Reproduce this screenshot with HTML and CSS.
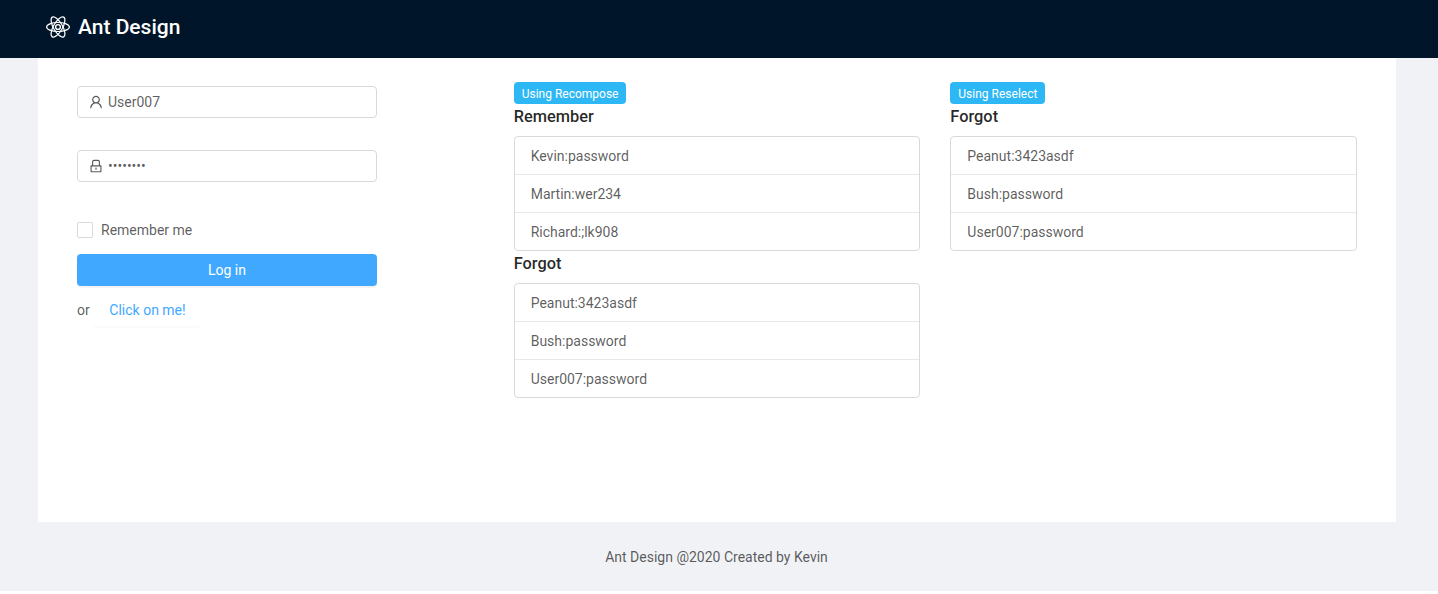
FILE: index.html
```html
<!DOCTYPE html>
<html lang="en">
<head>
<meta charset="utf-8">
<title>Ant Design</title>
<link rel="stylesheet" href="styles.css">
</head>
<body>
<div class="layout">
  <header class="header">
    <svg class="logo" viewBox="0 0 32 32" width="32" height="32" fill="none" stroke="#fff" stroke-width="1.2">
      <circle cx="16" cy="16" r="2.4" fill="none" stroke-width="1.4"/>
      <ellipse cx="16" cy="16" rx="11.4" ry="4.5"/>
      <ellipse cx="16" cy="16" rx="11.4" ry="4.5" transform="rotate(60 16 16)"/>
      <ellipse cx="16" cy="16" rx="11.4" ry="4.5" transform="rotate(120 16 16)"/>
    </svg>
    <span class="brand">Ant Design</span>
  </header>
  <main class="content">
    <section class="col">
      <form class="login">
        <label class="field">
          <svg class="icon" viewBox="64 64 896 896"><path d="M858.5 763.6a374 374 0 0 0-80.6-119.5 375.63 375.63 0 0 0-119.5-80.6c-.4-.2-.8-.3-1.2-.5C719.5 518 760 444.7 760 362c0-137-111-248-248-248S264 225 264 362c0 82.7 40.5 156 102.8 201.1-.4.2-.8.3-1.2.5-44.8 18.9-85 46-119.5 80.6a375.63 375.63 0 0 0-80.6 119.5A371.7 371.7 0 0 0 136 901.8a8 8 0 0 0 8 8.2h60c4.4 0 7.9-3.5 8-7.8 2-77.2 33-149.5 87.8-204.3 56.7-56.7 132-87.9 212.2-87.9s155.5 31.2 212.2 87.9C779 752.7 810 825 812 902.2c.1 4.4 3.6 7.8 8 7.8h60a8 8 0 0 0 8-8.2c-1-47.8-10.9-94.3-29.5-138.2zM512 534c-45.9 0-89.1-17.9-121.6-50.4S340 407.9 340 362c0-45.9 17.9-89.1 50.4-121.6S466.1 190 512 190s89.1 17.9 121.6 50.4S684 316.1 684 362c0 45.9-17.9 89.1-50.4 121.6S557.9 534 512 534z"/></svg>
          <input class="input" type="text" value="User007">
        </label>
        <label class="field">
          <svg class="icon" viewBox="64 64 896 896"><path d="M832 464h-68V240c0-70.7-57.3-128-128-128H388c-70.7 0-128 57.3-128 128v224h-68c-17.7 0-32 14.3-32 32v384c0 17.7 14.3 32 32 32h640c17.7 0 32-14.3 32-32V496c0-17.7-14.3-32-32-32zM332 240c0-30.9 25.1-56 56-56h248c30.9 0 56 25.1 56 56v224H332V240zm460 600H232V536h560v304zM484 701v53c0 4.4 3.6 8 8 8h40c4.4 0 8-3.6 8-8v-53a48.01 48.01 0 1 0-56 0z"/></svg>
          <input class="input" type="password" value="password">
        </label>
        <label class="remember"><span class="check"></span><span>Remember me</span></label>
        <button class="primary" type="button">Log in</button>
        <div class="alt"><span>or</span><button class="ghost" type="button">Click on me!</button></div>
      </form>
    </section>
    <section class="col">
      <span class="tag">Using Recompose</span>
      <h4 class="title">Remember</h4>
      <ul class="list">
        <li class="item">Kevin:password</li>
        <li class="item">Martin:wer234</li>
        <li class="item">Richard:;lk908</li>
      </ul>
      <h4 class="title">Forgot</h4>
      <ul class="list">
        <li class="item">Peanut:3423asdf</li>
        <li class="item">Bush:password</li>
        <li class="item">User007:password</li>
      </ul>
    </section>
    <section class="col">
      <span class="tag">Using Reselect</span>
      <h4 class="title">Forgot</h4>
      <ul class="list">
        <li class="item">Peanut:3423asdf</li>
        <li class="item">Bush:password</li>
        <li class="item">User007:password</li>
      </ul>
    </section>
  </main>
  <footer class="footer">Ant Design @2020 Created by Kevin</footer>
</div>
</body>
</html>
```
FILE: styles.css
```css
* { box-sizing: border-box; }
html, body { margin: 0; background: #fff; }
body {
  font-family: Roboto, "Liberation Sans", sans-serif;
  font-size: 14px;
  line-height: 1.5;
  color: rgba(0, 0, 0, 0.65);
}
.layout { background: #f0f2f5; }
.header {
  height: 58px;
  background: #001529;
  display: flex;
  align-items: center;
  padding: 0 0 4px 42px;
  gap: 4px;
}
.logo { display: block; }
.brand { color: #fff; font-size: 21px; font-weight: 500; line-height: 1; }
.content {
  margin: 0 42px 0 38px;
  height: 464px;
  padding: 24px;
  background: #fff;
  display: grid;
  grid-template-columns: repeat(3, 1fr);
}
.col { padding: 0 15px; min-width: 0; }
.login { width: 300px; padding-top: 4px; }
.field {
  display: flex;
  align-items: center;
  height: 32px;
  margin-bottom: 32px;
  padding: 0 11px;
  gap: 5px;
  border: 1px solid #d9d9d9;
  border-radius: 4px;
  background: #fff;
}
.icon { width: 14px; height: 14px; flex: none; fill: rgba(0, 0, 0, 0.65); }
.input {
  flex: 1;
  min-width: 0;
  border: 0;
  outline: 0;
  padding: 0;
  background: none;
  font: inherit;
  color: rgba(0, 0, 0, 0.65);
}
.remember {
  display: flex;
  align-items: center;
  gap: 8px;
  height: 32px;
  margin-bottom: 8px;
}
.check {
  width: 16px;
  height: 16px;
  border: 1px solid #d9d9d9;
  border-radius: 2px;
  background: #fff;
}
.primary {
  display: block;
  width: 100%;
  height: 32px;
  border: 0;
  border-radius: 4px;
  background: #40a9ff;
  color: #fff;
  font: inherit;
  box-shadow: 0 2px 0 rgba(0, 0, 0, 0.045);
}
.alt { display: flex; align-items: center; margin-top: 8px; gap: 3.6px; }
.ghost {
  height: 32px;
  padding: 0 15px 0 16px;
  border: 0;
  border-radius: 4px;
  background: #fff;
  color: #40a9ff;
  font: inherit;
  box-shadow: 0 2px 0 rgba(0, 0, 0, 0.015);
}
.tag {
  display: block;
  width: fit-content;
  height: 22px;
  padding: 1px 8px 0;
  border-radius: 4px;
  background: #2db7f5;
  color: #fff;
  font-size: 12px;
  line-height: 22px;
}
.title {
  margin: 0 0 8px;
  padding-top: 1px;
  height: 24px;
  font-size: 16.38px;
  font-weight: 500;
  line-height: 24px;
  color: rgba(0, 0, 0, 0.85);
}
.list {
  margin: 0;
  padding: 0;
  list-style: none;
  border: 1px solid #d9d9d9;
  border-radius: 4px;
}
.item {
  padding: 9px 16px 7px;
  border-bottom: 1px solid #e8e8e8;
}
.item:last-child { border-bottom: 0; }
.footer { padding: 25px 50px 23px; text-align: center; margin-right: 5px; }
```
